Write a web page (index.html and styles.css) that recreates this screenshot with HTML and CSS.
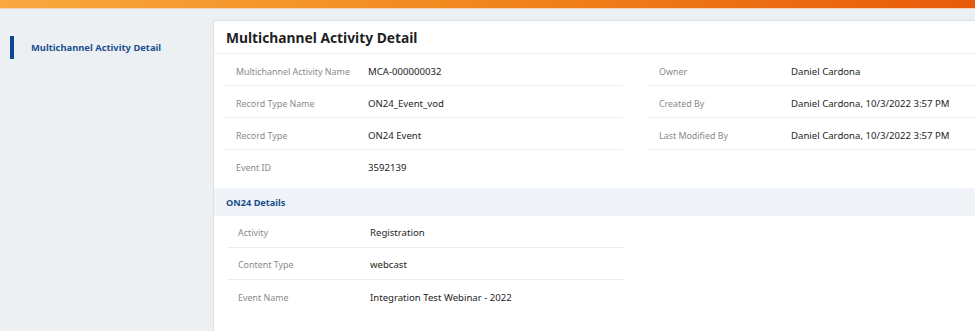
FILE: index.html
```html
<!DOCTYPE html>
<html lang="en">

<head>
    <meta charset="UTF-8">
    <meta name="viewport" content="width=device-width, initial-scale=1.0">
    <title>Multichannel Activity Detail</title>
    <link rel="stylesheet" href="styles.css">
</head>

<body>
    <div class="top-bar"></div>

    <div class="page">
        <nav class="sidebar">
            <a class="nav-item active" href="#">Multichannel Activity Detail</a>
        </nav>

        <main class="card">
            <h1 class="card-title">Multichannel Activity Detail</h1>

            <div class="field-grid">
                <div class="field-col">
                    <div class="field">
                        <span class="field-label">Multichannel Activity Name</span>
                        <span class="field-value">MCA-000000032</span>
                    </div>
                    <div class="field">
                        <span class="field-label">Record Type Name</span>
                        <span class="field-value">ON24_Event_vod</span>
                    </div>
                    <div class="field">
                        <span class="field-label">Record Type</span>
                        <span class="field-value">ON24 Event</span>
                    </div>
                    <div class="field last">
                        <span class="field-label">Event ID</span>
                        <span class="field-value">3592139</span>
                    </div>
                </div>
                <div class="field-col">
                    <div class="field">
                        <span class="field-label">Owner</span>
                        <span class="field-value">Daniel Cardona</span>
                    </div>
                    <div class="field">
                        <span class="field-label">Created By</span>
                        <span class="field-value">Daniel Cardona, 10/3/2022 3:57 PM</span>
                    </div>
                    <div class="field">
                        <span class="field-label">Last Modified By</span>
                        <span class="field-value">Daniel Cardona, 10/3/2022 3:57 PM</span>
                    </div>
                </div>
            </div>

            <h2 class="section-title">ON24 Details</h2>

            <div class="field-grid section-two">
                <div class="field-col">
                    <div class="field">
                        <span class="field-label">Activity</span>
                        <span class="field-value">Registration</span>
                    </div>
                    <div class="field">
                        <span class="field-label">Content Type</span>
                        <span class="field-value">webcast</span>
                    </div>
                    <div class="field last">
                        <span class="field-label">Event Name</span>
                        <span class="field-value">Integration Test Webinar - 2022</span>
                    </div>
                </div>
            </div>
        </main>
    </div>
</body>

</html>
```

FILE: styles.css
```css
* {
    box-sizing: border-box;
}

body {
    margin: 0;
    background-color: #edf0f3;
    font-family: "Noto Sans", "Open Sans", sans-serif;
    color: #1e1e1e;
    overflow: hidden;
}

.top-bar {
    height: 9px;
    background: linear-gradient(to right, #f8a83f, #f28a1f 45%, #e85a0a);
    border-bottom: 1px solid #f6d2b4;
}

.page {
    display: flex;
    padding-top: 11px;
}

.sidebar {
    width: 213px;
    flex-shrink: 0;
    padding: 16px 0 0 10px;
}

.nav-item {
    display: flex;
    align-items: center;
    height: 23px;
    padding-left: 17px;
    border-left: 4px solid #0b4a91;
    color: #1b4f8e;
    font-size: 9.4px;
    font-weight: 700;
    text-decoration: none;
}

.card {
    flex: 1;
    min-height: 320px;
    background-color: #fff;
    border-left: 1px solid #dde1e5;
    border-top: 1px solid #dde1e5;
    border-radius: 4px 0 0 0;
}

.card-title {
    margin: 0;
    height: 33px;
    padding-left: 12px;
    display: flex;
    align-items: center;
    font-size: 13.8px;
    font-weight: 700;
    color: #1f1f1f;
    border-bottom: 1px solid #eceef0;
}

.field-grid {
    display: grid;
    grid-template-columns: 397px 1fr;
    column-gap: 26px;
    padding-left: 11px;
    padding-bottom: 6px;
}

.field {
    display: flex;
    align-items: center;
    height: 32px;
    padding: 3px 0 0 11px;
    border-bottom: 1.5px solid #eceef0;
}

.field.last {
    border-bottom: none;
}

.field-label {
    width: 132px;
    flex-shrink: 0;
    font-size: 8.9px;
    color: #8a8a8a;
}

.field-value {
    font-size: 9.6px;
    color: #1e1e1e;
}

.section-title {
    margin: 0;
    height: 28px;
    padding-left: 12px;
    display: flex;
    align-items: center;
    background-color: #f0f4f8;
    color: #1b4f8e;
    font-size: 9.2px;
    font-weight: 700;
}

.section-two {
    padding-left: 13px;
}

.section-two .field {
    padding-top: 2px;
}
```
